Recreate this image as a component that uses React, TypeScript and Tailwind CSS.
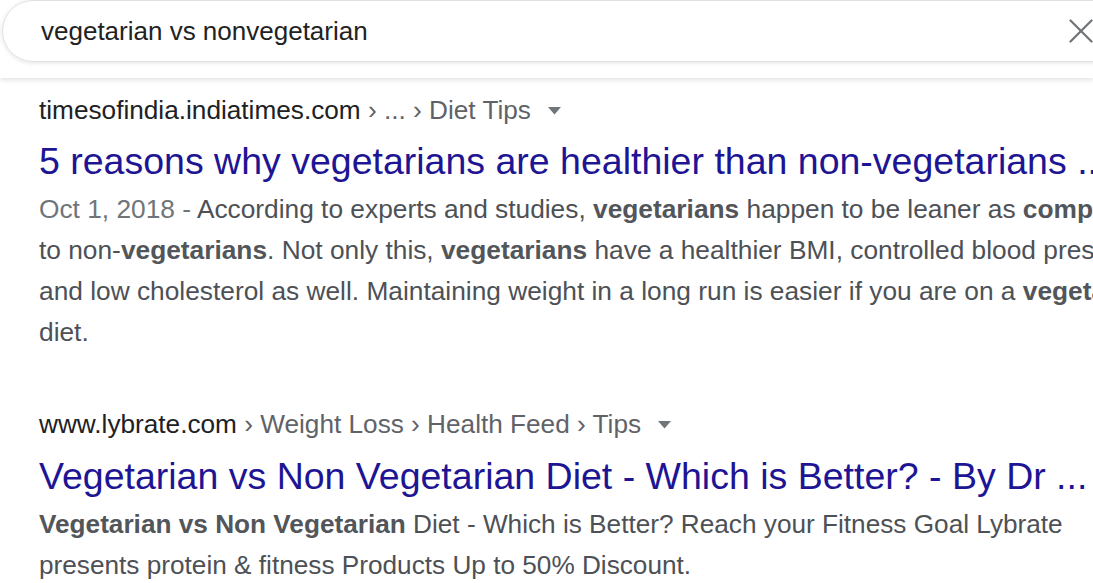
import { X } from 'lucide-react';

const Caret = () => (
  <svg width="13" height="8" viewBox="0 0 13 8" className="ml-[17px] inline-block">
    <path d="M0 0 L13 0 L6.5 7.5 Z" fill="#70757a" />
  </svg>
);

const B = ({ children }: { children: React.ReactNode }) => (
  <b className="font-bold text-[#52565a]">{children}</b>
);

export default function App() {
  return (
    <div className="w-[1093px] h-[583px] overflow-hidden bg-white font-['Liberation_Sans',Arial,sans-serif]">
      <div className="h-[78px] bg-white shadow-[0_2px_5px_rgba(0,0,0,0.12)] relative z-10">
        <div className="ml-[2px] w-[1200px] h-[62px] rounded-l-[31px] border border-[#dfe1e5] shadow-[0_1px_4px_rgba(32,33,36,0.12)] flex items-center">
          <span className="ml-[38px] text-[26px] text-[#222]">vegetarian vs nonvegetarian</span>
          <X size={42} strokeWidth={1.3} className="ml-auto mr-[99px] text-[#70757a]" />
        </div>
      </div>

      <div className="pl-[39px]">
        <div className="pt-[17px]">
          <div className="flex items-center text-[26.2px] leading-[31px] whitespace-nowrap">
            <span className="text-[#202124]">timesofindia.indiatimes.com</span>
            <span className="text-[#5f6368]">&nbsp;› ... › Diet Tips</span>
            <Caret />
          </div>
          <div className="mt-[13px] text-[37.5px] leading-[44px] text-[#1e1594] whitespace-nowrap">
            5 reasons why vegetarians are healthier than non-vegetarians ...
          </div>
          <div className="mt-[6px] text-[26.3px] leading-[41px] text-[#4d5156] whitespace-nowrap">
            <div>
              <span className="text-[#70757a]">Oct 1, 2018 - </span>According to experts and studies, <B>vegetarians</B> happen to be leaner as <B>compared</B>
            </div>
            <div>
              to non-<B>vegetarians</B>. Not only this, <B>vegetarians</B> have a healthier BMI, controlled blood pressure
            </div>
            <div>
              and low cholesterol as well. Maintaining weight in a long run is easier if you are on a <B>vegetarian</B>
            </div>
            <div>diet.</div>
          </div>
        </div>

        <div className="pt-[56px]">
          <div className="flex items-center text-[26.2px] leading-[31px] whitespace-nowrap">
            <span className="text-[#202124]">www.lybrate.com</span>
            <span className="text-[#5f6368]">&nbsp;› Weight Loss › Health Feed › Tips</span>
            <Caret />
          </div>
          <div className="mt-[14px] text-[37.5px] leading-[44px] text-[#1e1594] whitespace-nowrap">
            Vegetarian vs Non Vegetarian Diet - Which is Better? - By Dr ...
          </div>
          <div className="mt-[6px] text-[26.2px] leading-[41px] text-[#4d5156] whitespace-nowrap">
            <div>
              <B>Vegetarian vs Non Vegetarian</B> Diet - Which is Better? Reach your Fitness Goal Lybrate
            </div>
            <div>presents protein &amp; fitness Products Up to 50% Discount.</div>
          </div>
        </div>
      </div>
    </div>
  );
}
